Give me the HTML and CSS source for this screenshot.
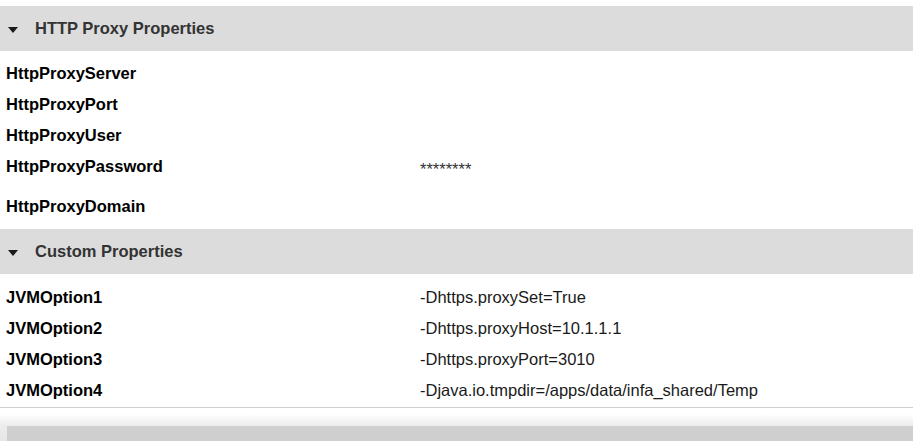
FILE: index.html
```html
<!DOCTYPE html>
<html>
<head>
<meta charset="utf-8">
<link rel="stylesheet" href="styles.css">
</head>
<body>
<div class="page">
  <div class="section-head">
    <span class="caret"></span>
    <span class="section-title">HTTP Proxy Properties</span>
  </div>
  <div class="rows">
    <div class="row"><div class="label">HttpProxyServer</div><div class="value"></div></div>
    <div class="row"><div class="label">HttpProxyPort</div><div class="value"></div></div>
    <div class="row"><div class="label">HttpProxyUser</div><div class="value"></div></div>
    <div class="row tall"><div class="label">HttpProxyPassword</div><div class="value mask">********</div></div>
    <div class="row"><div class="label">HttpProxyDomain</div><div class="value"></div></div>
  </div>
  <div class="section-head">
    <span class="caret"></span>
    <span class="section-title">Custom Properties</span>
  </div>
  <div class="rows last">
    <div class="row"><div class="label">JVMOption1</div><div class="value">-Dhttps.proxySet=True</div></div>
    <div class="row"><div class="label">JVMOption2</div><div class="value">-Dhttps.proxyHost=10.1.1.1</div></div>
    <div class="row"><div class="label">JVMOption3</div><div class="value">-Dhttps.proxyPort=3010</div></div>
    <div class="row"><div class="label">JVMOption4</div><div class="value">-Djava.io.tmpdir=/apps/data/infa_shared/Temp</div></div>
  </div>
  <div class="footer">
    <div class="footer-bar"></div>
  </div>
</div>
</body>
</html>
```

FILE: styles.css
```css
html, body {
  margin: 0;
  padding: 0;
  background: #ffffff;
}
body {
  font-family: "Liberation Sans", Arial, sans-serif;
  font-size: 16.5px;
  color: #000;
  overflow: hidden;
}
.page {
  padding-top: 6px;
  width: 913px;
}
.section-head {
  height: 45px;
  background: #dcdcdc;
  display: flex;
  align-items: center;
  padding-left: 8px;
}
.caret {
  width: 0;
  height: 0;
  border-left: 5px solid transparent;
  border-right: 5px solid transparent;
  border-top: 6px solid #1a1a1a;
  margin-top: 2px;
}
.section-title {
  margin-left: 17px;
  font-weight: bold;
  color: #333;
}
.rows {
  padding: 7px 0 7px 0;
}
.rows.last {
  padding-top: 8px;
  padding-bottom: 1px;
  border-bottom: 1px solid #cfcfcf;
}
.row {
  height: 31px;
  display: flex;
  align-items: center;
}
.row.tall {
  height: 40px;
  align-items: flex-start;
  padding-top: 6px;
  box-sizing: border-box;
}
.label {
  width: 414px;
  padding-left: 6px;
  font-weight: bold;
  color: #000;
}
.value {
  color: #1a1a1a;
}
.value.mask {
  color: #333;
  padding-top: 3px;
}
.footer {
  height: 33px;
  padding-top: 18px;
  box-sizing: border-box;
  background: linear-gradient(#ffffff 0px, #ffffff 6px, #ececec 18px, #e6e6e6 33px);
  padding-left: 7px;
}
.footer-bar {
  height: 15px;
  background: #cfcfcf;
}
```
